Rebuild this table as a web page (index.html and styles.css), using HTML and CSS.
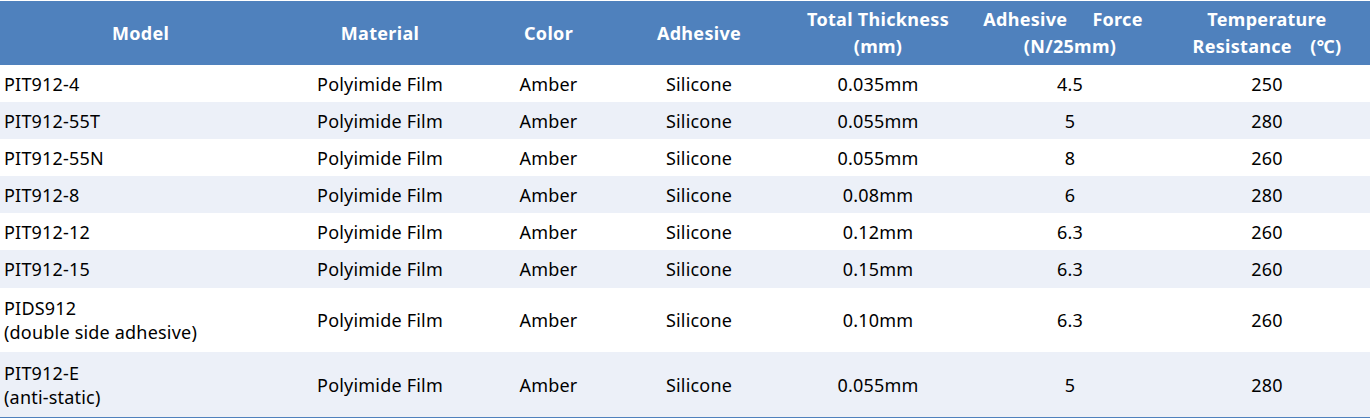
FILE: index.html
```html
<!DOCTYPE html>
<html>
<head>
<meta charset="utf-8">
<link rel="stylesheet" href="styles.css">
</head>
<body>
<table class="spec">
  <colgroup>
    <col class="c1"><col class="c2"><col class="c3"><col class="c4"><col class="c5"><col class="c6"><col class="c7">
  </colgroup>
  <thead>
    <tr>
      <th>Model</th>
      <th>Material</th>
      <th>Color</th>
      <th>Adhesive</th>
      <th>Total Thickness<br>(mm)</th>
      <th>Adhesive<span class="gap-wide"></span>Force<span class="gap-tail"></span><br>(N/25mm)</th>
      <th>Temperature<br>Resistance&#12288;(℃)</th>
    </tr>
  </thead>
  <tbody>
    <tr><td class="model">PIT912-4</td><td>Polyimide Film</td><td>Amber</td><td>Silicone</td><td>0.035mm</td><td>4.5</td><td>250</td></tr>
    <tr class="alt"><td class="model">PIT912-55T</td><td>Polyimide Film</td><td>Amber</td><td>Silicone</td><td>0.055mm</td><td>5</td><td>280</td></tr>
    <tr><td class="model">PIT912-55N</td><td>Polyimide Film</td><td>Amber</td><td>Silicone</td><td>0.055mm</td><td>8</td><td>260</td></tr>
    <tr class="alt"><td class="model">PIT912-8</td><td>Polyimide Film</td><td>Amber</td><td>Silicone</td><td>0.08mm</td><td>6</td><td>280</td></tr>
    <tr><td class="model">PIT912-12</td><td>Polyimide Film</td><td>Amber</td><td>Silicone</td><td>0.12mm</td><td>6.3</td><td>260</td></tr>
    <tr class="alt six"><td class="model">PIT912-15</td><td>Polyimide Film</td><td>Amber</td><td>Silicone</td><td>0.15mm</td><td>6.3</td><td>260</td></tr>
    <tr class="tall"><td class="model">PIDS912<br>(double side adhesive)</td><td>Polyimide Film</td><td>Amber</td><td>Silicone</td><td>0.10mm</td><td>6.3</td><td>260</td></tr>
    <tr class="alt tall last"><td class="model">PIT912-E<br>(anti-static)</td><td>Polyimide Film</td><td>Amber</td><td>Silicone</td><td>0.055mm</td><td>5</td><td>280</td></tr>
  </tbody>
</table>
</body>
</html>
```

FILE: styles.css
```css
html, body {
  margin: 0;
  padding: 0;
  background: #ffffff;
}
body {
  padding-top: 1px;
  font-family: "Noto Sans", "Open Sans", "Liberation Sans", sans-serif;
  font-size: 18px;
  letter-spacing: 0.2px;
  color: #000000;
}
.spec {
  width: 1370px;
  border-collapse: collapse;
  table-layout: fixed;
}
.c1 { width: 281px; }
.c2 { width: 198px; }
.c3 { width: 139px; }
.c4 { width: 162px; }
.c5 { width: 196px; }
.c6 { width: 188px; }
.c7 { width: 206px; }
.spec th {
  background: #4f81bd;
  color: #ffffff;
  font-weight: bold;
  font-size: 18px;
  letter-spacing: 0.3px;
  height: 64px;
  line-height: 27px;
  padding: 0;
  text-align: center;
  vertical-align: middle;
  white-space: nowrap;
}
.gap-wide {
  display: inline-block;
  width: 25px;
}
.gap-tail {
  display: inline-block;
  width: 14px;
}
.spec td {
  height: 37px;
  padding: 0;
  text-align: center;
  vertical-align: middle;
  line-height: 24px;
  white-space: nowrap;
}
.spec tr.six td {
  height: 38px;
}
.spec td.model {
  text-align: left;
  padding-left: 4px;
}
.spec tr.alt td {
  background: #ecf0f8;
}
.spec tr.tall td {
  height: 64px;
}
.spec tr.last td {
  height: 65px;
  border-bottom: 1px solid #4f81bd;
}
```
